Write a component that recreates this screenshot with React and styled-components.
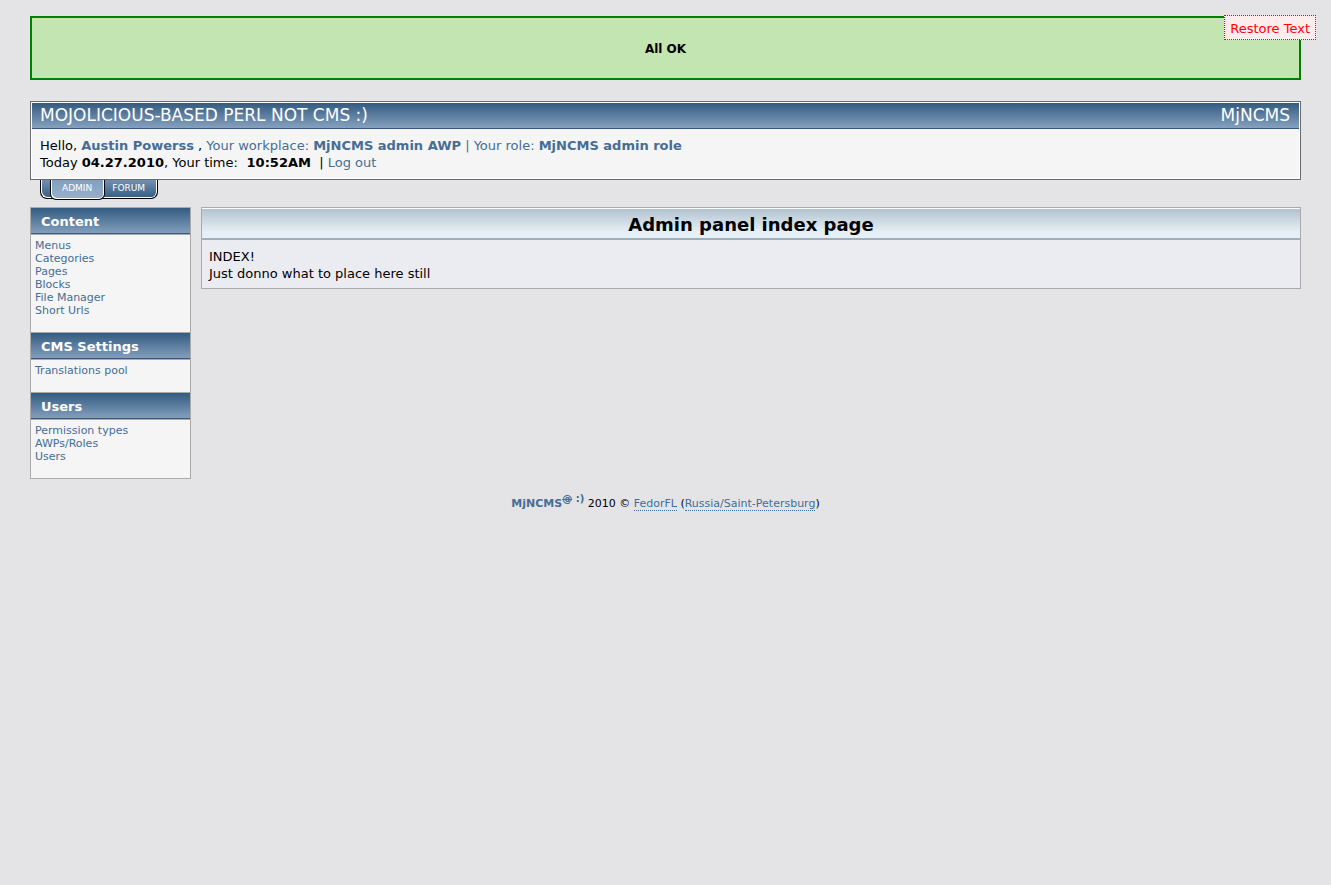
import React from "react";
import styled, { createGlobalStyle } from "styled-components";

const GlobalStyle = createGlobalStyle`
  * { box-sizing: border-box; }
  body {
    margin: 0;
    background: #e4e4e6;
    color: #000;
    font: 13px/17px Verdana, "DejaVu Sans", sans-serif;
  }
  h1, h2, p, ul { margin: 0; padding: 0; }
  ul { list-style: none; }
`;

const Page = styled.div`
  position: relative;
  padding: 16px 30px;
`;

const Notice = styled.div`
  display: flex;
  align-items: center;
  justify-content: center;
  height: 64px;
  margin-bottom: 21px;
  padding-top: 3px;
  border: 2px solid #008000;
  background: #c2e5b1;
  font-size: 12px;
  font-weight: bold;
`;

const RestoreButton = styled.button`
  position: absolute;
  top: 15px;
  right: 15px;
  height: 25px;
  padding: 1px 5px 0;
  border: 1px dotted #f00;
  background: #ffeded;
  color: #f00;
  font: inherit;
  cursor: pointer;
`;

const Header = styled.header`
  padding: 1px;
  border: 1px solid #6a6a6a;
  background: #f5f5f5;
  box-shadow: inset 0 0 0 1px #fff;
`;

const Banner = styled.div`
  display: flex;
  justify-content: space-between;
  height: 26px;
  padding: 0 9px 0 8px;
  border-bottom: 1px solid #36587e;
  background: linear-gradient(#335b80, #86a1bf);
  color: #fff;
  font-size: 17px;
  line-height: 25px;
`;

const BannerTitle = styled.h1`
  font-size: inherit;
  font-weight: normal;
`;

const Welcome = styled.div`
  padding: 8px 8px 7px;
  white-space: pre-wrap;
`;

const TextLink = styled.a`
  color: #466d94;
  text-decoration: none;
`;

const Tabs = styled.nav`
  display: flex;
  width: max-content;
  height: 19px;
  margin: 0 0 8px 10px;
  padding-left: 9px;
  border: solid #000;
  border-width: 0 1px 1px;
  border-radius: 0 0 7px 7px;
  background: linear-gradient(#7190b1, #345d84);
  box-shadow: inset 1px -1px #fff, inset -1px 0 #fff;
`;

const Tab = styled.a`
  height: ${(p) => (p.$active ? "20px" : "18px")};
  padding: ${(p) => (p.$active ? "0 12px 0 11px" : "0 12px 0 7px")};
  border: solid #000;
  border-width: ${(p) => (p.$active ? "0 1px 1px" : "0")};
  border-radius: 0 0 6px 6px;
  background: ${(p) => (p.$active ? "linear-gradient(#809fc0, #9ab0ca)" : "none")};
  box-shadow: ${(p) => (p.$active ? "inset 1px -1px #fff, inset -1px 0 #fff" : "none")};
  color: #fff;
  font-size: 9px;
  line-height: 16px;
  text-decoration: none;
`;

const Columns = styled.div`
  display: flex;
  align-items: flex-start;
  gap: 10px;
`;

const Sidebar = styled.aside`
  flex: 0 0 161px;
  border: solid #aaa;
  border-width: 0 1px 1px;
  background: #f5f5f5;
`;

const MenuTitle = styled.h2`
  height: 28px;
  padding-left: 10px;
  border: solid #aaa;
  border-width: 1px 0;
  background: linear-gradient(#335b80, #86a1bf);
  box-shadow: inset 0 -1px #3a587c;
  color: #fff;
  font-size: 13px;
  line-height: 27px;
`;

const MenuList = styled.ul`
  padding: 4px 4px 15px;
  font-size: 11px;
  line-height: 13px;
`;

const MenuItem = styled.li`
  height: 13px;
`;

const Panel = styled.main`
  flex: 1;
  border: 1px solid #aaa;
  background: #ebecf1;
`;

const PanelTitle = styled.h2`
  height: 32px;
  border-top: 1px solid #fff;
  border-bottom: 2px solid #9eafb9;
  background: linear-gradient(#b3c3d1, #d3dfe7 50%, #e7eff6 80%, #e7f0f7);
  font-size: 18px;
  line-height: 31px;
  text-align: center;
`;

const PanelBody = styled.div`
  padding: 8px 7px 6px;
`;

const Footer = styled.footer`
  margin-top: 16px;
  font-size: 11px;
  line-height: 17px;
  text-align: center;
`;

const Mark = styled.sup`
  font-size: 10px;
  line-height: 0;
`;

const Strike = styled.s`
  text-decoration: line-through;
`;

const DottedLink = styled(TextLink)`
  border-bottom: 1px dotted #466d94;
`;

const menus = [
  ["Content", ["Menus", "Categories", "Pages", "Blocks", "File Manager", "Short Urls"]],
  ["CMS Settings", ["Translations pool"]],
  ["Users", ["Permission types", "AWPs/Roles", "Users"]],
];

export default function App() {
  return (
    <>
      <GlobalStyle />
      <Page>
        <Notice role="status">All OK</Notice>
        <RestoreButton type="button">Restore Text</RestoreButton>
        <Header>
          <Banner>
            <BannerTitle>MOJOLICIOUS-BASED PERL NOT CMS :)</BannerTitle>
            <span>MjNCMS</span>
          </Banner>
          <Welcome>
            <p>
              Hello, <TextLink href="#profile"><b>Austin Powerss</b></TextLink>
              {" , "}
              <TextLink href="#role">
                Your workplace: <b>MjNCMS admin AWP</b> | Your role: <b>MjNCMS admin role</b>
              </TextLink>
            </p>
            <p>
              Today <b>04.27.2010</b>, Your time: <b> 10:52AM</b>
              {"  | "}
              <TextLink href="#logout">Log out</TextLink>
            </p>
          </Welcome>
        </Header>
        <Tabs>
          <Tab href="#admin" $active>ADMIN</Tab>
          <Tab href="#forum">FORUM</Tab>
        </Tabs>
        <Columns>
          <Sidebar>
            {menus.map(([title, items]) => (
              <nav key={title} aria-label={title}>
                <MenuTitle>{title}</MenuTitle>
                <MenuList>
                  {items.map((item) => (
                    <MenuItem key={item}>
                      <TextLink href="#menu">{item}</TextLink>
                    </MenuItem>
                  ))}
                </MenuList>
              </nav>
            ))}
          </Sidebar>
          <Panel>
            <PanelTitle>Admin panel index page</PanelTitle>
            <PanelBody>
              <p>INDEX!</p>
              <p>Just donno what to place here still</p>
            </PanelBody>
          </Panel>
        </Columns>
        <Footer>
          <TextLink href="#mjncms">
            <b>MjNCMS<Mark><Strike>@</Strike> :)</Mark></b>
          </TextLink>
          {" 2010 © "}
          <DottedLink href="#fedorfl">FedorFL</DottedLink>
          {" ("}
          <DottedLink href="#location">Russia/Saint-Petersburg</DottedLink>)
        </Footer>
      </Page>
    </>
  );
}
